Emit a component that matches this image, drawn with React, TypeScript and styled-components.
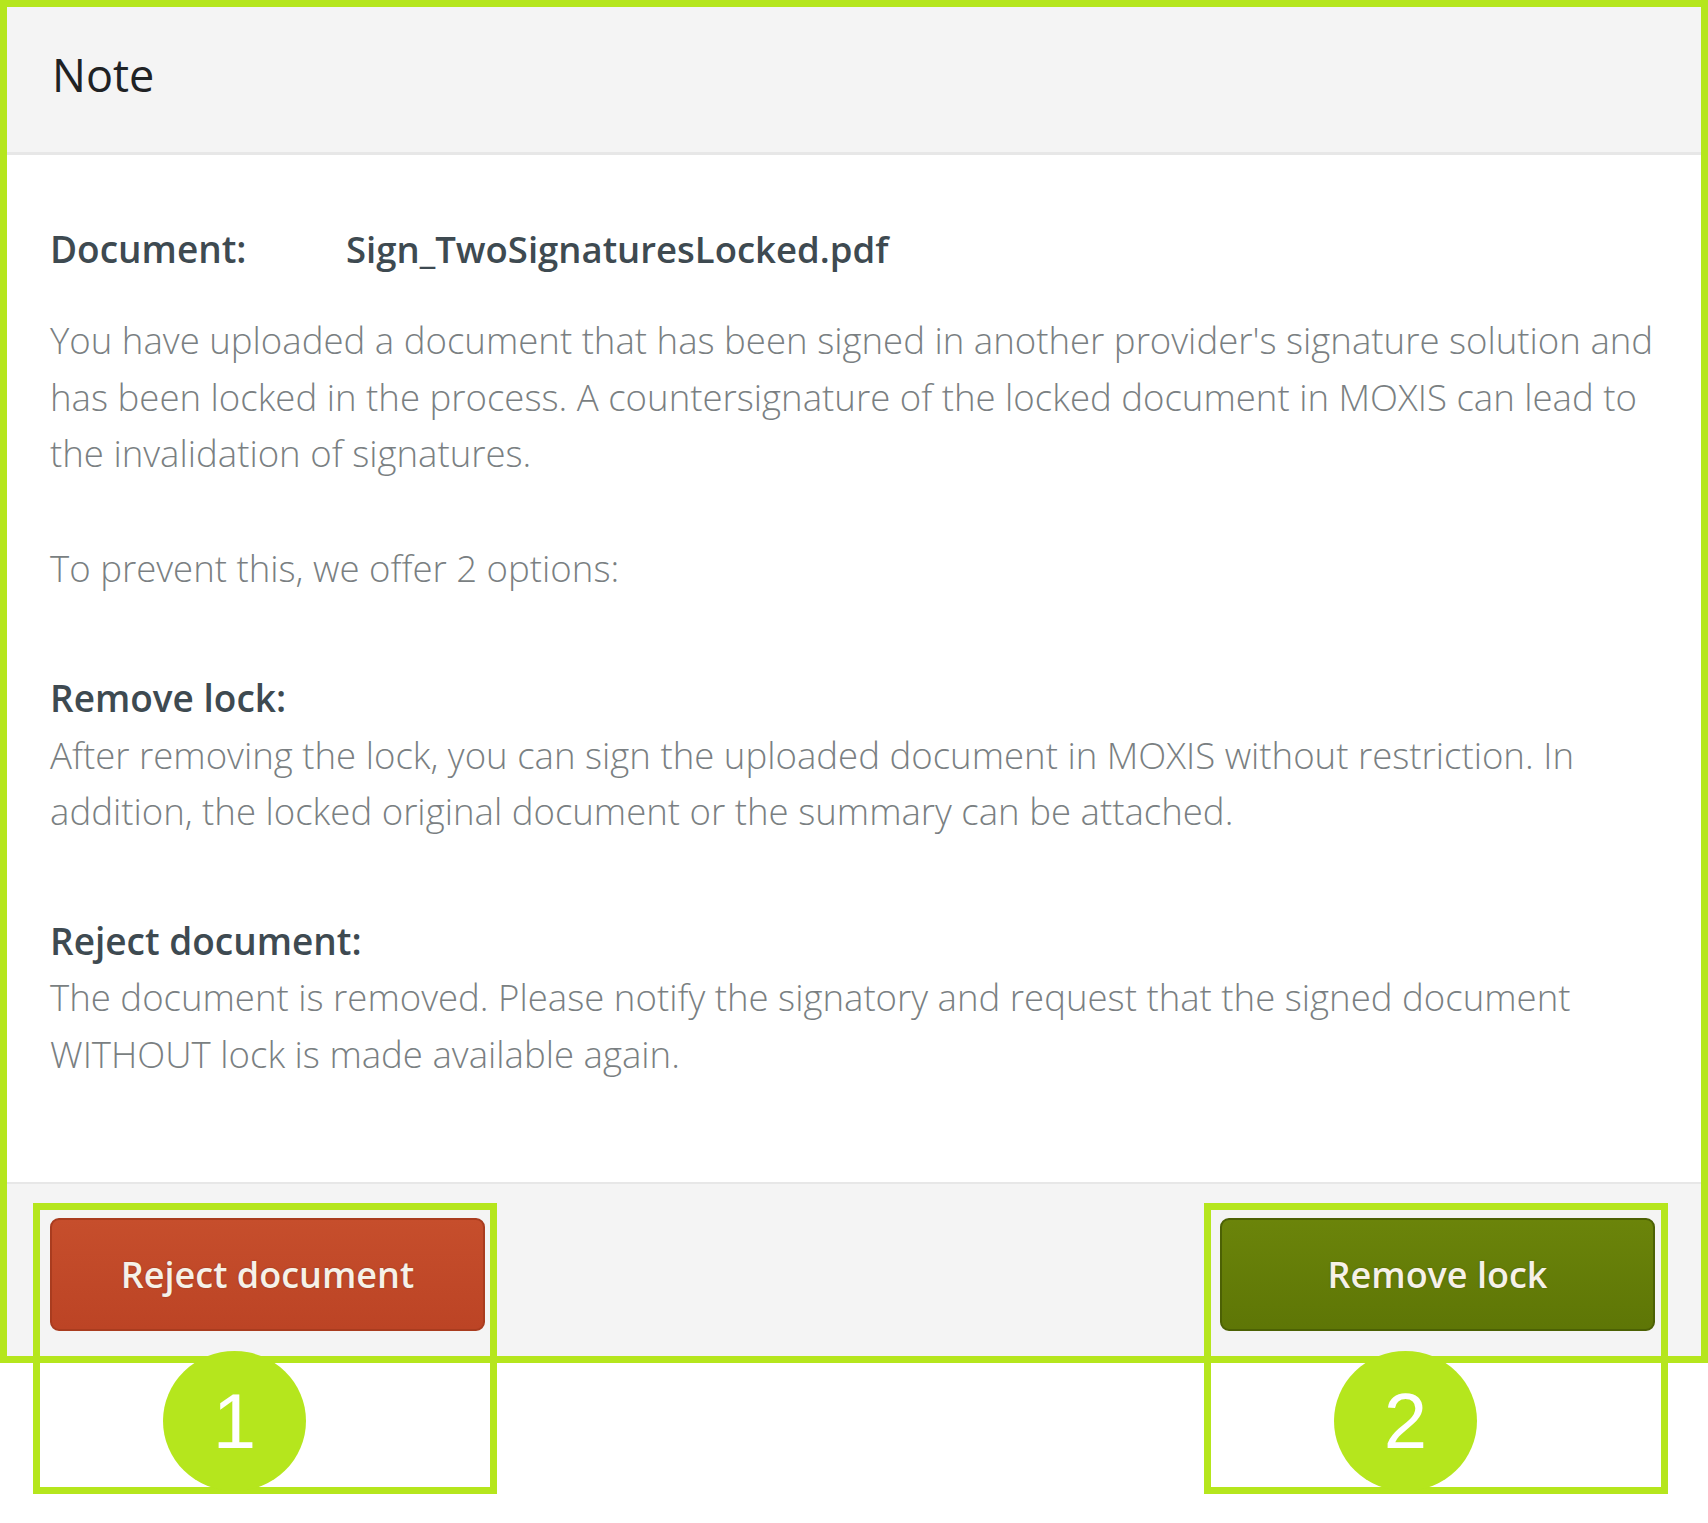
import React from 'react';
import styled, { createGlobalStyle } from 'styled-components';

const lime = '#b5e61d';

const GlobalStyle = createGlobalStyle`
  body {
    margin: 0;
    background: #ffffff;
    font-family: 'Open Sans', 'Noto Sans', sans-serif;
  }
`;

const Page = styled.div`
  position: relative;
  width: 1708px;
  height: 1523px;
  background: #ffffff;
  overflow: hidden;
`;

const Dialog = styled.div`
  box-sizing: border-box;
  width: 1708px;
  height: 1363px;
  border: 7px solid ${lime};
  display: flex;
  flex-direction: column;
  background: #ffffff;
`;

const Header = styled.div`
  height: 148px;
  box-sizing: border-box;
  background: #f4f4f4;
  border-bottom: 3px solid #e7e7e7;
  display: flex;
  align-items: center;
  padding: 0 0 10px 45px;
`;

const Title = styled.h3`
  margin: 0;
  font-size: 45px;
  font-weight: 400;
  color: #1f2224;
`;

const Body = styled.div`
  flex: 1;
  padding: 66px 20px 0 43px;
`;

const DocRow = styled.div`
  display: grid;
  grid-template-columns: 296px 1fr;
  font-size: 37px;
  font-weight: 600;
  line-height: 56px;
  color: #3e4a51;
  margin-bottom: 35px;
`;

const DocName = styled.span`
  font-weight: 600;
  font-size: 36.5px;
`;

const Text = styled.p<{ $gap?: number }>`
  margin: 0 0 ${(p) => p.$gap ?? 0}px;
  font-size: 36.6px;
  font-weight: 300;
  line-height: 56.5px;
  color: #7a7f82;
`;

const Option = styled.div<{ $gap?: number }>`
  margin-bottom: ${(p) => p.$gap ?? 0}px;
`;

const OptionTitle = styled.h4`
  margin: 0;
  font-size: 37px;
  font-weight: 600;
  line-height: 56.5px;
  color: #3e4a51;
`;

const Footer = styled.div`
  height: 174px;
  box-sizing: border-box;
  background: #f4f4f4;
  border-top: 2px solid #e7e7e7;
  display: flex;
  justify-content: space-between;
  align-items: flex-start;
  padding: 34px 46px 0 43px;
`;

const Button = styled.button<{ $tone: 'danger' | 'primary' }>`
  width: 435px;
  height: 113px;
  border-radius: 9px;
  font-family: 'Open Sans', 'Noto Sans', sans-serif;
  font-size: 36px;
  font-weight: 600;
  color: #f6f1e8;
  text-shadow: 0 0 2px rgba(0, 0, 0, 0.25);
  cursor: pointer;
  ${(p) =>
    p.$tone === 'danger'
      ? `
    background: linear-gradient(#c64e2c, #bc4425);
    border: 2px solid #a93c1f;
  `
      : `
    background: linear-gradient(#6b840a, #5e7606);
    border: 2px solid #4c6104;
  `}
`;

const Callout = styled.div<{ $left: number }>`
  position: absolute;
  left: ${(p) => p.$left}px;
  top: 1203px;
  width: 464px;
  height: 291px;
  box-sizing: border-box;
  border: 7px solid ${lime};
  pointer-events: none;
`;

const Marker = styled.div<{ $left: number }>`
  position: absolute;
  left: ${(p) => p.$left}px;
  top: 1351px;
  width: 143px;
  height: 140px;
  border-radius: 50%;
  background: ${lime};
  color: #ffffff;
  font-family: 'Liberation Sans', Arial, sans-serif;
  font-size: 78px;
  display: flex;
  align-items: center;
  justify-content: center;
`;

export default function App() {
  return (
    <Page>
      <GlobalStyle />
      <Dialog>
        <Header>
          <Title>Note</Title>
        </Header>
        <Body>
          <DocRow>
            <span>Document:</span>
            <DocName>Sign_TwoSignaturesLocked.pdf</DocName>
          </DocRow>
          <Text $gap={58}>
            You have uploaded a document that has been signed in another provider's signature
            solution and has been locked in the process. A countersignature of the locked document
            in MOXIS can lead to the invalidation of signatures.
          </Text>
          <Text $gap={74}>To prevent this, we offer 2 options:</Text>
          <Option $gap={73}>
            <OptionTitle>Remove lock:</OptionTitle>
            <Text>
              After removing the lock, you can sign the uploaded document in MOXIS without
              restriction. In addition, the locked original document or the summary can be
              attached.
            </Text>
          </Option>
          <Option>
            <OptionTitle>Reject document:</OptionTitle>
            <Text>
              The document is removed. Please notify the signatory and request that the signed
              document WITHOUT lock is made available again.
            </Text>
          </Option>
        </Body>
        <Footer>
          <Button $tone="danger">Reject document</Button>
          <Button $tone="primary">Remove lock</Button>
        </Footer>
      </Dialog>
      <Callout $left={33} />
      <Callout $left={1204} />
      <Marker $left={163}>1</Marker>
      <Marker $left={1334}>2</Marker>
    </Page>
  );
}
